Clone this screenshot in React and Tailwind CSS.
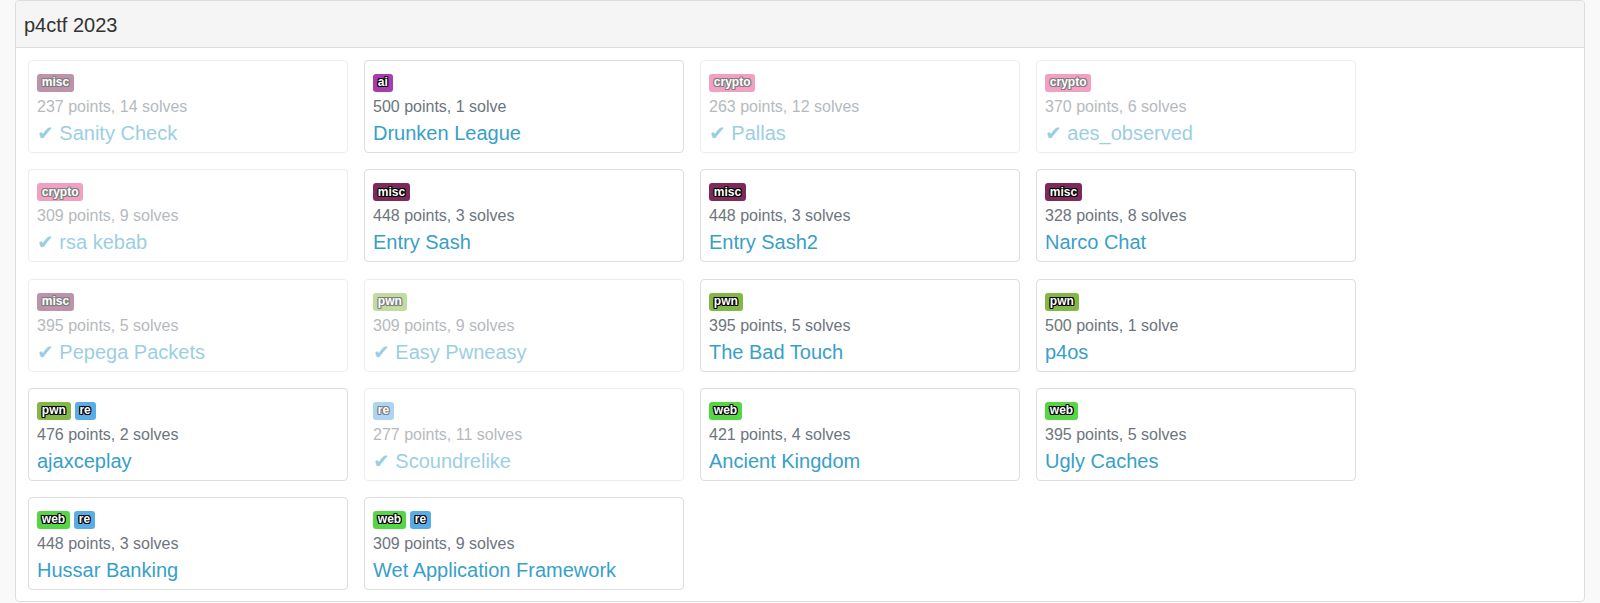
const LABEL_COLORS = {
  misc: "bg-[#7d2a5a]",
  ai: "bg-[#a93bb1]",
  crypto: "bg-[#e5438b]",
  pwn: "bg-[#84b846]",
  web: "bg-[#55d745]",
  re: "bg-[#59ade6]",
};

const challenges = [
  { tags: ["misc"], points: 237, solves: 14, name: "Sanity Check", solved: true },
  { tags: ["ai"], points: 500, solves: 1, name: "Drunken League" },
  { tags: ["crypto"], points: 263, solves: 12, name: "Pallas", solved: true },
  { tags: ["crypto"], points: 370, solves: 6, name: "aes_observed", solved: true },
  { tags: ["crypto"], points: 309, solves: 9, name: "rsa kebab", solved: true },
  { tags: ["misc"], points: 448, solves: 3, name: "Entry Sash" },
  { tags: ["misc"], points: 448, solves: 3, name: "Entry Sash2" },
  { tags: ["misc"], points: 328, solves: 8, name: "Narco Chat" },
  { tags: ["misc"], points: 395, solves: 5, name: "Pepega Packets", solved: true },
  { tags: ["pwn"], points: 309, solves: 9, name: "Easy Pwneasy", solved: true },
  { tags: ["pwn"], points: 395, solves: 5, name: "The Bad Touch" },
  { tags: ["pwn"], points: 500, solves: 1, name: "p4os" },
  { tags: ["pwn", "re"], points: 476, solves: 2, name: "ajaxceplay" },
  { tags: ["re"], points: 277, solves: 11, name: "Scoundrelike", solved: true },
  { tags: ["web"], points: 421, solves: 4, name: "Ancient Kingdom" },
  { tags: ["web"], points: 395, solves: 5, name: "Ugly Caches" },
  { tags: ["web", "re"], points: 448, solves: 3, name: "Hussar Banking" },
  { tags: ["web", "re"], points: 309, solves: 9, name: "Wet Application Framework" },
];

const Label = ({ tag }) => (
  <span
    className={`${LABEL_COLORS[tag]} inline-block rounded-[3px] px-[4.8px] pt-[2.4px] pb-[3.6px] text-[12px] leading-none font-bold text-white [text-shadow:-1px_-1px_0_#000,1px_-1px_0_#000,-1px_1px_0_#000,1px_1px_0_#000,0_1px_0_#000,0_-1px_0_#000,1px_0_0_#000,-1px_0_0_#000]`}
  >
    {tag}
  </span>
);

const ChallengeCard = ({ c }) => (
  <div
    className={`h-[93px] rounded-[4px] border border-[#dddddd] bg-white px-[8px] pt-[13px] pb-[5px] ${
      c.solved ? "opacity-50" : ""
    }`}
  >
    <div className="flex h-[18px] gap-[4px]">
      {c.tags.map((t) => (
        <Label key={t} tag={t} />
      ))}
    </div>
    <div className="mt-[3px] text-[16px] leading-[24px] text-[#6c757d]">
      {c.points} points, {c.solves} {c.solves === 1 ? "solve" : "solves"}
    </div>
    <div className="text-[20px] leading-[28px] text-[#389fc9] whitespace-nowrap">
      {c.solved ? "✔ " : ""}
      {c.name}
    </div>
  </div>
);

export default function App() {
  return (
    <div
      className="min-h-[603px] bg-[#f9f9f9] px-[15px]"
      style={{ fontFamily: '"Liberation Sans", "DejaVu Sans", Arial, sans-serif' }}
    >
      <div className="rounded-[4px] border border-[#dddddd] bg-white">
        <div className="rounded-t-[4px] border-b border-[#dddddd] bg-[#f5f5f5] px-[8px] pt-[13px] pb-[11px]">
          <h3 className="text-[20px] leading-[22px] text-[#333333]">p4ctf 2023</h3>
        </div>
        <div className="px-[12px] pt-[12px] pb-[11px]">
          <div className="grid grid-cols-[repeat(4,320px)] gap-x-[16px] gap-y-[16.25px]">
            {challenges.map((c) => (
              <ChallengeCard key={c.name} c={c} />
            ))}
          </div>
        </div>
      </div>
    </div>
  );
}
